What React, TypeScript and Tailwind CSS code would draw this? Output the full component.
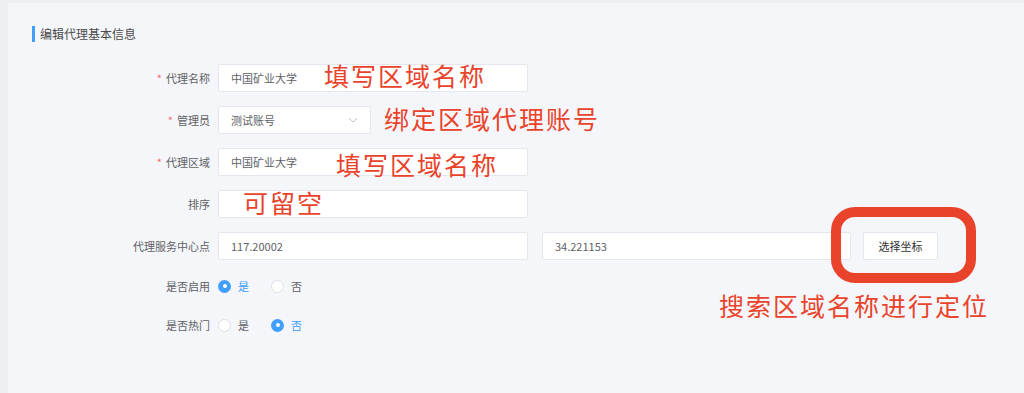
import React from 'react'

const labelCls = 'w-[118px] shrink-0 pr-2 text-right text-[11px] text-[#606266]'
const inputCls =
  'h-[28px] rounded-[2px] border border-[#e4e7ed] bg-white px-[12px] flex items-center text-[11px] text-[#606266]'

function Label({ text, required }: { text: string; required?: boolean }) {
  return (
    <div className={labelCls}>
      {required && <span className="mr-1 text-[#f56c6c]">*</span>}
      {text}
    </div>
  )
}

function Radio({ checked, text }: { checked?: boolean; text: string }) {
  return (
    <div className="flex items-center gap-[7px]">
      {checked ? (
        <span className="flex h-[13px] w-[13px] items-center justify-center rounded-full bg-[#409eff]">
          <span className="h-[4px] w-[4px] rounded-full bg-white" />
        </span>
      ) : (
        <span className="h-[13px] w-[13px] rounded-full border border-[#dcdfe6] bg-white" />
      )}
      <span className={checked ? 'text-[11px] text-[#409eff]' : 'text-[11px] text-[#606266]'}>{text}</span>
    </div>
  )
}

const noteCls =
  'absolute leading-none text-[25px] tracking-[2px] text-[#e9432b] whitespace-nowrap'

export default function App() {
  return (
    <div
      className="relative h-[393px] w-[1024px] overflow-hidden bg-[#eeeff1] pl-[8px] pt-[3px]"
      style={{ fontFamily: '"Noto Sans CJK SC", "Liberation Sans", sans-serif' }}
    >
      <div className="h-full bg-[#f5f6fa] pl-[24px] pt-[22px]">
        {/* 标题 */}
        <div className="flex items-center">
          <span className="h-[16px] w-[3px] bg-[#409eff]" />
          <span className="ml-[5px] text-[12px] text-[#4a4a4a]">编辑代理基本信息</span>
        </div>

        <div className="mt-[21px] flex flex-col pl-[68px]">
          <div className="flex h-[28px] items-center">
            <Label text="代理名称" required />
            <div className={`${inputCls} w-[310px]`}>中国矿业大学</div>
          </div>

          <div className="mt-[14px] flex h-[28px] items-center">
            <Label text="管理员" required />
            <div className={`${inputCls} w-[153px] justify-between`}>
              <span>测试账号</span>
              <svg width="10" height="6" viewBox="0 0 10 6" fill="none">
                <path d="M1 1l4 4 4-4" stroke="#c0c4cc" strokeWidth="1" />
              </svg>
            </div>
          </div>

          <div className="mt-[14px] flex h-[28px] items-center">
            <Label text="代理区域" required />
            <div className={`${inputCls} w-[310px]`}>中国矿业大学</div>
          </div>

          <div className="mt-[14px] flex h-[28px] items-center">
            <Label text="排序" />
            <div className={`${inputCls} w-[310px]`} />
          </div>

          <div className="mt-[14px] flex h-[28px] items-center">
            <Label text="代理服务中心点" />
            <div className={`${inputCls} w-[310px]`}>117.20002</div>
            <div className={`${inputCls} ml-[14px] w-[309px]`}>34.221153</div>
            <button className="ml-[12px] flex h-[28px] w-[75px] items-center justify-center rounded-[2px] border border-[#e4e7ed] bg-white text-[11px] text-[#333]">
              选择坐标
            </button>
          </div>

          <div className="mt-[12px] flex h-[28px] items-center">
            <Label text="是否启用" />
            <div className="flex items-center gap-[22px]">
              <Radio checked text="是" />
              <Radio text="否" />
            </div>
          </div>

          <div className="mt-[11px] flex h-[28px] items-center">
            <Label text="是否热门" />
            <div className="flex items-center gap-[22px]">
              <Radio text="是" />
              <Radio checked text="否" />
            </div>
          </div>
        </div>
      </div>

      {/* 标注 */}
      <div className={`${noteCls} left-[324px] top-[63px]`}>填写区域名称</div>
      <div className={`${noteCls} left-[384px] top-[106px]`}>绑定区域代理账号</div>
      <div className={`${noteCls} left-[336px] top-[152px]`}>填写区域名称</div>
      <div className={`${noteCls} left-[243px] top-[190px]`}>可留空</div>
      <div className="absolute left-[831px] top-[207px] h-[76px] w-[145px] rounded-[24px] border-[10px] border-[#e9432b]" />
      <div className={`${noteCls} left-[719px] top-[293px]`}>搜索区域名称进行定位</div>
    </div>
  )
}
